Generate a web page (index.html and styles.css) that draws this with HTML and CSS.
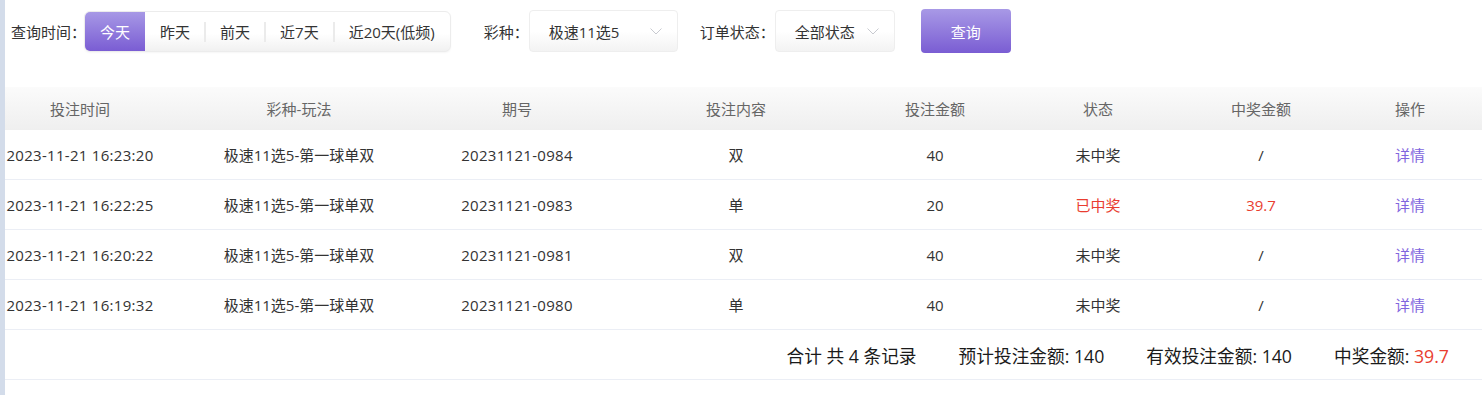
FILE: index.html
```html
<!DOCTYPE html>
<html lang="zh-CN">
<head>
<meta charset="utf-8">
<title>投注记录</title>
<link rel="stylesheet" href="styles.css">
</head>
<body>
<div class="page">
  <aside class="rail"></aside>
  <main class="main">
    <div class="filters">
      <span class="label">查询时间：</span>
      <div class="seg">
        <span class="seg-item active">今天</span>
        <span class="seg-item">昨天</span>
        <span class="seg-item sep">前天</span>
        <span class="seg-item sep">近7天</span>
        <span class="seg-item sep">近20天(低频)</span>
      </div>
      <span class="label label-lottery">彩种：</span>
      <div class="select select-lottery">
        <span>极速11选5</span>
        <svg class="chev" width="12" height="7" viewBox="0 0 12 7"><polyline points="0.5,0.5 6,6 11.5,0.5" fill="none" stroke="#c8cad0" stroke-width="1"/></svg>
      </div>
      <span class="label label-status">订单状态：</span>
      <div class="select select-status">
        <span>全部状态</span>
        <svg class="chev" width="12" height="7" viewBox="0 0 12 7"><polyline points="0.5,0.5 6,6 11.5,0.5" fill="none" stroke="#c8cad0" stroke-width="1"/></svg>
      </div>
      <button class="search">查询</button>
    </div>

    <div class="grid">
      <div class="row head">
        <div>投注时间</div><div>彩种-玩法</div><div>期号</div><div>投注内容</div><div>投注金额</div><div>状态</div><div>中奖金额</div><div>操作</div>
      </div>
      <div class="row">
        <div class="num">2023-11-21 16:23:20</div><div>极速11选5-第一球单双</div><div class="num">20231121-0984</div><div>双</div><div>40</div><div>未中奖</div><div>/</div><div class="link">详情</div>
      </div>
      <div class="row">
        <div class="num">2023-11-21 16:22:25</div><div>极速11选5-第一球单双</div><div class="num">20231121-0983</div><div>单</div><div>20</div><div class="red">已中奖</div><div class="red">39.7</div><div class="link">详情</div>
      </div>
      <div class="row">
        <div class="num">2023-11-21 16:20:22</div><div>极速11选5-第一球单双</div><div class="num">20231121-0981</div><div>双</div><div>40</div><div>未中奖</div><div>/</div><div class="link">详情</div>
      </div>
      <div class="row">
        <div class="num">2023-11-21 16:19:32</div><div>极速11选5-第一球单双</div><div class="num">20231121-0980</div><div>单</div><div>40</div><div>未中奖</div><div>/</div><div class="link">详情</div>
      </div>
    </div>

    <div class="summary">
      <span>合计 共 4 条记录</span>
      <span>预计投注金额: 140</span>
      <span>有效投注金额: 140</span>
      <span>中奖金额: <em class="red">39.7</em></span>
    </div>
  </main>
</div>
</body>
</html>
```

FILE: styles.css
```css
* { box-sizing: border-box; }
html, body {
  margin: 0;
  padding: 0;
  background: #fff;
  overflow: hidden;
}
body {
  font-family: "Open Sans", "Noto Sans CJK SC", sans-serif;
  color: #333;
  font-size: 15px;
}
.page {
  display: flex;
  width: 1482px;
  height: 395px;
}
.rail {
  width: 5px;
  flex: 0 0 5px;
  background: #d3dcea;
}
.main {
  flex: 1;
  min-width: 0;
  overflow: hidden;
}

/* filters */
.filters {
  height: 62px;
  display: flex;
  align-items: center;
  padding-left: 6px;
}
.label {
  font-size: 15px;
  color: #333;
  white-space: nowrap;
}
.seg {
  display: flex;
  height: 41px;
  margin-left: -2px;
  border: 1px solid #ececec;
  border-radius: 6px;
  overflow: hidden;
  background: linear-gradient(#ffffff 55%, #f1f1f1);
  box-shadow: 0 1px 2px rgba(0,0,0,0.04);
}
.seg-item {
  position: relative;
  display: flex;
  align-items: center;
  padding: 0 15px;
  font-size: 15px;
  color: #333;
  white-space: nowrap;
}
.seg-item.sep::before {
  content: "";
  position: absolute;
  left: -1px;
  top: 10px;
  width: 2px;
  height: 20px;
  background: #ebebeb;
}
.seg-item.active {
  color: #fff;
  background: linear-gradient(#a798e6, #7a5dd3);
}
.label-lottery { margin-left: 33px; }
.label-status { margin-left: 22px; }
.select {
  height: 42px;
  display: flex;
  align-items: center;
  justify-content: space-between;
  padding: 0 15px 0 19px;
  border: 1px solid #eeeeee;
  border-radius: 4px;
  background: linear-gradient(#ffffff 50%, #f3f3f3);
  font-size: 15px;
  color: #333;
}
.select-lottery { width: 149px; }
.select-status { width: 120px; }
.chev { display: block; }
.search {
  margin-left: 26px;
  width: 90px;
  height: 44px;
  border: 0;
  border-radius: 4px;
  background: linear-gradient(#a899e6, #7a5dd3);
  color: #fff;
  font-family: inherit;
  font-size: 15px;
  padding: 0;
}

/* grid table */
.grid {
  margin-top: 25px;
  width: 1500px;
}
.row {
  display: grid;
  grid-template-columns: 150px 288px 148px 290px 108px 218px 108px 190px;
  height: 50px;
  align-items: center;
  text-align: center;
  border-bottom: 1px solid #ebeef5;
  font-size: 15px;
  color: #333;
  white-space: nowrap;
}
.row > div { overflow: visible; }
.row .num { letter-spacing: 0.3px; }
.row.head {
  height: 43px;
  border-bottom: 0;
  color: #666;
  background: linear-gradient(#fbfbfb, #efefef);
}
.red { color: #e93d30; }
.link { color: #7f66de; }
em.red { font-style: normal; }

/* summary */
.summary {
  height: 50px;
  display: flex;
  justify-content: flex-end;
  align-items: center;
  gap: 42px;
  padding-right: 33px;
  border-bottom: 1px solid #ebeef5;
  font-size: 17.7px;
  color: #1a1a1a;
  white-space: nowrap;
}
```
